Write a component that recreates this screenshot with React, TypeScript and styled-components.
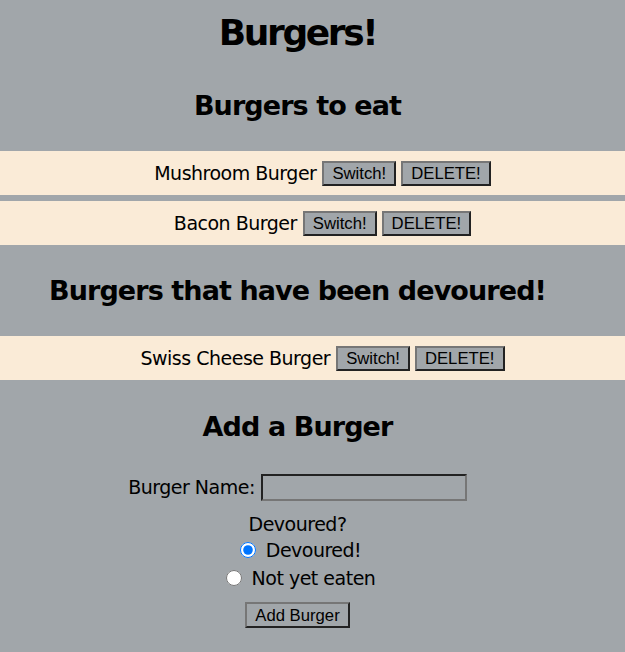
import React, { useState } from 'react'
import styled, { createGlobalStyle } from 'styled-components'

const GlobalStyle = createGlobalStyle`
    html, body {
        margin: 0;
        padding: 0;
        background: #a1a6aa;
    }
    body {
        font-family: "Comic Sans MS", "DejaVu Sans", sans-serif;
        color: #000;
    }
`

const Page = styled.div`
    display: flex;
    flex-direction: column;
    padding-top: 9px;
    min-height: 652px;
    box-sizing: border-box;
`
const Title = styled.h1`
    margin: 0 30px 0 0;
    font-size: 36px;
    letter-spacing: -2.4px;
    line-height: 48px;
    text-align: center;
    font-weight: bold;
`
const Heading = styled.h2<{ $top: number }>`
    margin: ${(p) => p.$top}px 30px 27px 0;
    font-size: 27px;
    letter-spacing: -0.9px;
    line-height: 36px;
    text-align: center;
    font-weight: bold;
`
const List = styled.ul`
    list-style: none;
    margin: 0;
    padding: 0;
    display: flex;
    flex-direction: column;
    gap: 6px;
`
const BurgerRow = styled.li`
    background: #faebd7;
    height: 44px;
    padding: 0 30px 0 50px;
    display: flex;
    align-items: center;
    justify-content: center;
    gap: 6px;
    font-size: 19px;
    letter-spacing: -0.5px;
`
const Button = styled.button`
    font-family: "Liberation Sans", Arial, sans-serif;
    font-size: 16.7px;
    letter-spacing: 0;
    height: 25px;
    padding: 0 8px;
    margin: 0;
    background: #a1a6aa;
    color: #000;
    border: 2px solid;
    border-color: #767676 #222 #222 #767676;
    line-height: 19px;
`
const Actions = styled.span`
    display: flex;
    gap: 5px;
`
const Form = styled.form`
    display: flex;
    flex-direction: column;
    align-items: center;
    margin: 1px 30px 0 0;
    font-size: 19px;
    letter-spacing: -0.5px;
`
const NameLine = styled.label`
    display: flex;
    align-items: center;
    gap: 6px;
    height: 28px;
`
const TextInput = styled.input`
    width: 206px;
    height: 27px;
    box-sizing: border-box;
    background: transparent;
    border: 2px solid;
    border-color: #222 #767676 #767676 #222;
    margin: 0;
`
const Question = styled.div`
    margin-top: 11px;
    line-height: 24px;
`
const RadioLine = styled.label`
    display: flex;
    align-items: center;
    gap: 10px;
    line-height: 28px;
    margin-left: 6px;
`
const Radio = styled.input`
    width: 16px;
    height: 16px;
    margin: 0;
    accent-color: #0075ff;
`
const Submit = styled(Button)`
    margin-top: 10px;
    height: 26px;
`

const toEat = ['Mushroom Burger', 'Bacon Burger']
const eaten = ['Swiss Cheese Burger']

const Burger: React.FC<{ name: string }> = ({ name }) => (
    <BurgerRow>
        <span>{name}</span>
        <Actions>
            <Button type="button">Switch!</Button>
            <Button type="button">DELETE!</Button>
        </Actions>
    </BurgerRow>
)

export default function App() {
    const [devoured, setDevoured] = useState(true)
    return (
        <Page>
            <GlobalStyle />
            <Title>Burgers!</Title>
            <Heading $top={31}>Burgers to eat</Heading>
            <List>
                {toEat.map((b) => (
                    <Burger key={b} name={b} />
                ))}
            </List>
            <Heading $top={28}>Burgers that have been devoured!</Heading>
            <List>
                {eaten.map((b) => (
                    <Burger key={b} name={b} />
                ))}
            </List>
            <Heading $top={29}>Add a Burger</Heading>
            <Form onSubmit={(e) => e.preventDefault()}>
                <NameLine>
                    Burger Name: <TextInput type="text" />
                </NameLine>
                <Question>Devoured?</Question>
                <RadioLine>
                    <Radio type="radio" name="devoured" checked={devoured} onChange={() => setDevoured(true)} />
                    Devoured!
                </RadioLine>
                <RadioLine>
                    <Radio type="radio" name="devoured" checked={!devoured} onChange={() => setDevoured(false)} />
                    Not yet eaten
                </RadioLine>
                <Submit type="submit">Add Burger</Submit>
            </Form>
        </Page>
    )
}
